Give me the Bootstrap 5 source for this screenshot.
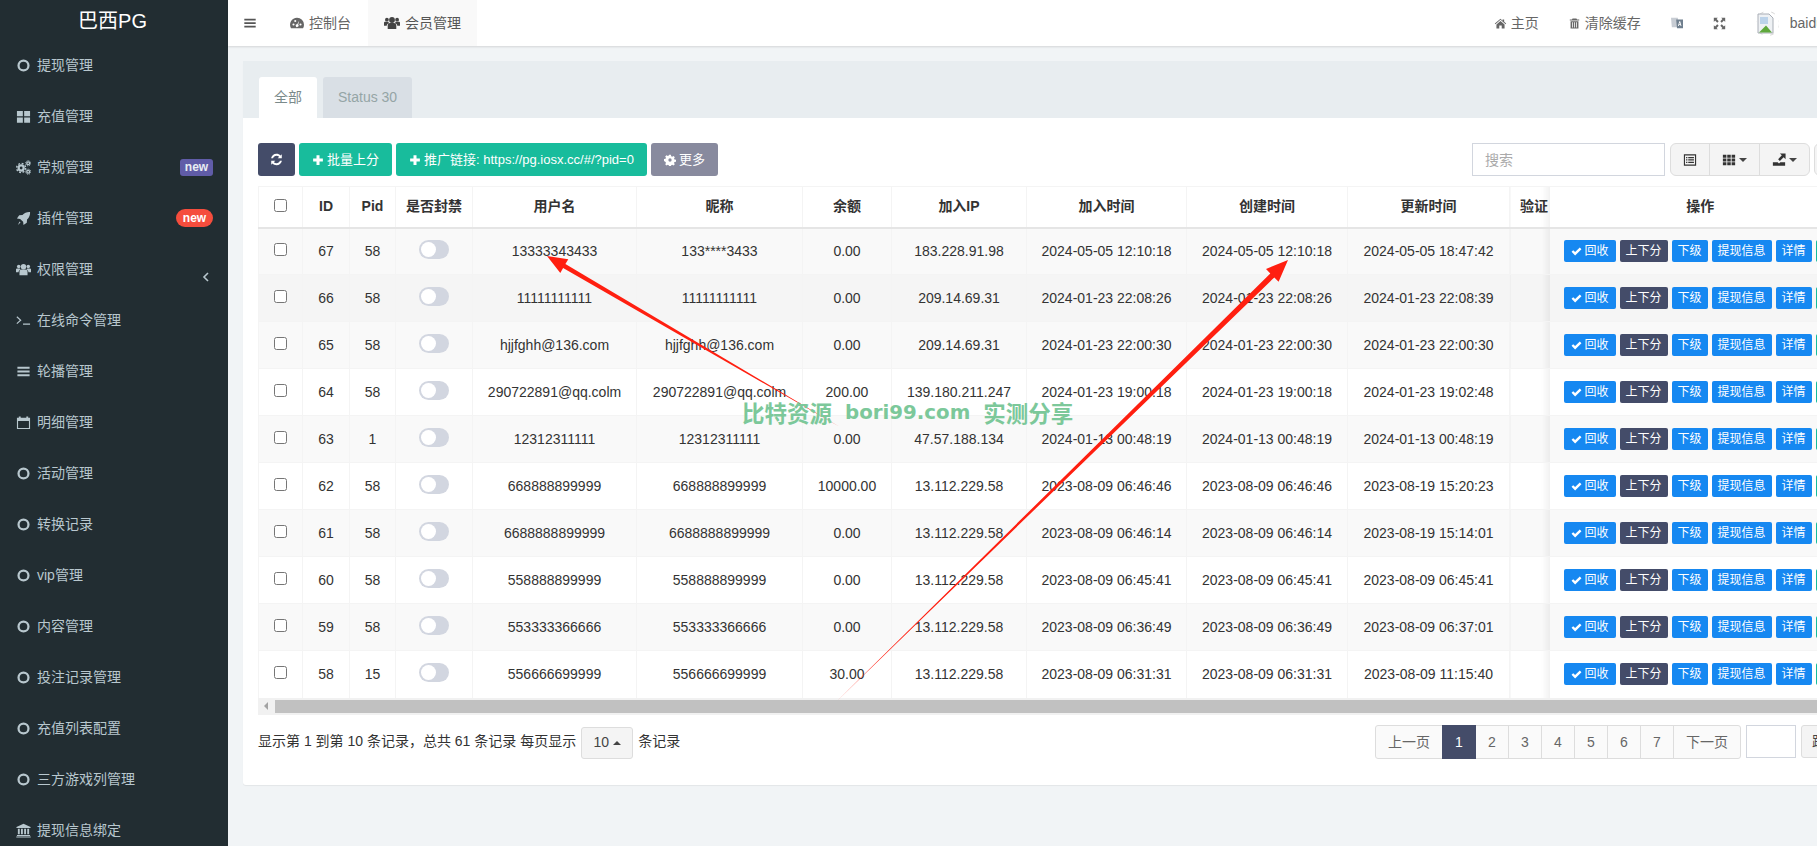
<!DOCTYPE html>
<html lang="zh-CN">
<head>
    <meta charset="UTF-8">
    <meta name="viewport" content="width=device-width, initial-scale=1.0">
    <title>巴西PG - 会员管理</title>
    <link href="https://cdn.jsdelivr.net/npm/bootstrap@5.3.0/dist/css/bootstrap.min.css" rel="stylesheet">
    <style>
        html, body { height: 846px; overflow: hidden; }
        body { font-family: "Liberation Sans", "Noto Sans CJK SC", sans-serif; font-size: 14px; color: #333; background: #f1f4f6; position: relative; }
        .ico { width: 14px; height: 14px; fill: currentColor; flex: none; }

        .side-bar { width: 228px; height: 846px; background: #222d32; color: #b8c7ce; flex: none; overflow: hidden; }
        .side-logo { height: 40px; line-height: 42px; text-align: center; color: #fff; font-size: 20px; padding-right: 3px; }
        .side-item { height: 51px; padding-left: 16px; gap: 6px; color: #b8c7ce; text-decoration: none; position: relative; }
        .side-item .ico { width: 15px; height: 15px; }
        .side-tag { position: absolute; right: 15px; font-size: 12px; font-weight: 700; line-height: 1; padding: 2px 7px 3px; height: 17px; color: #e8edf2; }
        .tag-purple { background: #605ca8; border-radius: 3px; right: 15px; width: 33px; padding: 2px 0; text-align: center; }
        .tag-red { background: #f54d3d; border-radius: 9px; height: 18px; width: 37px; padding: 3px 0; text-align: center; top: 16px; color: #fff; }
        .side-caret { position: absolute; right: 18px; top: 27px; width: 8px; height: 12px; fill: none; stroke: #b8c7ce; stroke-width: 1.6; }

        .main-area { width: 1589px; flex: none; }
        .top-bar { height: 46px; width: 1611px; background: #fff; box-shadow: 0 1px 2px rgba(0,0,0,.12); color: #666; }
        .top-link { height: 46px; padding: 0 15px; gap: 5px; color: #666; text-decoration: none; white-space: nowrap; }
        .top-tab { padding: 0 17px; }
        .top-tab.on { background: #f9f9f9; color: #555; padding: 0 16px; }
        .top-tab.on .ico { color: #444; width: 16px; height: 16px; }
        .top-burger { color: #555; padding: 0 16px 0 15px; }
        .top-home { gap: 4px; }
        .top-home .ico { width: 13px; height: 13px; }
        .top-trash .ico { width: 11px; height: 13px; }
        .top-trans .ico { width: 12px; height: 14px; }
        .top-full .ico { width: 13px; height: 13px; }
        .avatar-box { width: 23px; height: 25px; margin-right: 6px; }
        .avatar-box svg { width: 23px; height: 25px; display: block; }

        .page-wrap { padding: 15px 0 0 15px; }
        .panel-box { width: 1640px; height: 724px; background: #fff; border-radius: 3px; box-shadow: 0 1px 1px rgba(0,0,0,.06); }
        .panel-tabs { height: 57px; background: #e8edf0; padding: 16px 0 0 16px; border: 0; gap: 6px; }
        .panel-tabs .nav-link { height: 41px; line-height: 41px; padding: 0 15px; border: 0; border-radius: 3px 3px 0 0; background: #d9dfe5; color: #95a5a6; margin: 0; }
        .panel-tabs .nav-link.active { background: #fff; color: #7b8a8b; }
        .panel-body-box { padding: 25px 32px 0 15px; }

        .tool-btn { height: 33px; line-height: 31px; padding: 0 12px; font-size: 13px; border-radius: 3px; color: #fff; border: 1px solid transparent; display: inline-flex; align-items: center; gap: 3px; white-space: nowrap; }
        .tool-btn .ico { width: 12px; height: 12px; }
        .tool-btn.only-ico { padding: 0 11px; }
        .tool-btn.only-ico .ico { width: 13px; height: 13px; }
        .c-dark, .c-dark:hover { background: #444c69; color: #fff; }
        .c-green, .c-green:hover { background: #18bc9c; color: #fff; }
        .c-grey, .c-grey:hover { background: #888a9e; color: #fff; }
        .search-input { width: 193px; height: 33px; border: 1px solid #d2d6de; border-radius: 0; font-size: 14px; padding: 0 12px; margin-right: 5px; }
        .search-input::placeholder { color: #aaa; }
        .plain-btn, .plain-btn:hover { background: #f4f4f4; border: 1px solid #ddd; color: #333; height: 33px; padding: 0 12px; display: inline-flex; align-items: center; gap: 3px; font-size: 14px; }
        .plain-btn .ico { width: 14px; height: 14px; }
        .tri { display: inline-block; border-left: 4px solid transparent; border-right: 4px solid transparent; border-top: 4px solid #444; }
        .tri.up { border-top: 0; border-bottom: 4px solid #444; }

        .table-shell { margin-top: 10px; position: relative; width: 1593px; }
        .user-table { table-layout: fixed; width: 1593px; margin: 0; border-top: 1px solid #f4f4f4; }
        .user-table th, .user-table td { text-align: center; vertical-align: middle; padding: 0; border-bottom: 0; border-right: 1px solid #f4f4f4; border-top: 1px solid #f4f4f4; color: #333; white-space: nowrap; overflow: hidden; box-shadow: none; --bs-table-accent-bg: transparent; }
        .user-table th:first-child, .user-table td:first-child { border-left: 1px solid #f4f4f4; }
        .user-table thead th { height: 41px; border-top: 0; border-bottom: 2px solid #e5e5e5; font-weight: 700; }
        .user-table tbody tr { height: 47px; }
        .user-table tbody tr.row-a td { background: #f9f9f9; }
        .user-table tbody tr.row-hover td { background: #f5f5f5; }
        .user-table tbody tr.row-b td { background: #fff; }
        .user-table tbody tr td.fade-cell, .user-table thead tr th.fade-cell { background-image: linear-gradient(to right, transparent calc(100% - 9px), rgba(0,0,0,.055)); border-right: 0; }
        .user-table input[type=checkbox] { display: block; margin: -3px auto 0; width: 13px; height: 13px; }
        .user-table td.op-cell, .user-table th.op-cell { position: relative; z-index: 2; border-right: 0; text-align: left; }
        .user-table th.op-cell { text-align: center; background: #fff; }
        .clip-head { display: block; width: 40px; padding-left: 10px; text-align: left; }
        .tog-sw { display: block; width: 30px; height: 19px; border-radius: 10px; background: #d2d6e0; position: relative; margin: -3px auto 0; }
        .tog-sw::after { content: ""; position: absolute; left: 2px; top: 2px; width: 15px; height: 15px; border-radius: 50%; background: #fff; }
        .op-row { padding-left: 14px; gap: 4px; }
        .op-btn { height: 22px; line-height: 20px; padding: 0 6px; font-size: 12px; border-radius: 2px; color: #fff; border: 0; display: inline-flex; align-items: center; gap: 3px; white-space: nowrap; }
        .op-btn .ico { width: 11px; height: 11px; }
        .op-btn.has-ico { padding: 0 7px; }
        .c-blue, .c-blue:hover { background: #1688f1; color: #fff; }

        .scroll-track { height: 17px; background: #f1f1f1; padding: 2px 0 2px 17px; position: relative; }
        .scroll-thumb { height: 13px; background: #c1c1c1; }
        .scroll-arrow { position: absolute; left: 6px; top: 4px; border-top: 4px solid transparent; border-bottom: 4px solid transparent; border-right: 4px solid #a3a3a3; }

        .foot-row { margin-top: 10px; height: 34px; }
        .foot-info { gap: 5px; color: #333; }
        .size-btn, .size-btn:hover { width: 52px; height: 32px; background: #f4f4f4; border: 1px solid #ddd; border-radius: 3px; color: #444; justify-content: center; display: inline-flex; align-items: center; gap: 4px; padding: 0; margin-top: 2px; font-size: 14px; }
        .page-list { margin: 0; --bs-pagination-padding-x: 0; --bs-pagination-padding-y: 0; --bs-pagination-font-size: 14px; --bs-pagination-color: #666; --bs-pagination-bg: #fafafa; --bs-pagination-border-color: #ddd; --bs-pagination-border-radius: 3px; --bs-pagination-active-bg: #444c69; --bs-pagination-active-border-color: #444c69; }
        .page-list .page-link { height: 34px; line-height: 32px; text-align: center; }
        .pg-w { width: 34px; }
        .pg-text { width: 68px; }
        .jump-input { width: 50px; height: 33px; border: 1px solid #d2d6de; margin-left: 5px; }
        .jump-btn, .jump-btn:hover { width: 50px; height: 33px; background: #f4f4f4; border: 1px solid #ddd; border-radius: 3px; color: #444; margin-left: 5px; padding: 0; font-size: 14px; }

        .mark-layer { position: absolute; left: 0; top: 0; width: 1817px; height: 846px; pointer-events: none; z-index: 5; }
        .stamp-text { position: absolute; left: 742px; top: 396px; z-index: 6; color: #7cc89a; font: 700 22.500px "Noto Sans CJK SC", sans-serif; white-space: nowrap; display: flex; align-items: center; gap: 13px; }
        .stamp-latin { font: 700 19.800px "DejaVu Sans", sans-serif; }
    </style>
</head>
<body class="d-flex">
    <svg width="0" height="0" class="position-absolute">
        <symbol id="i-ring" viewBox="0 0 16 16"><path fill-rule="evenodd" d="M8 1.500a6.500 6.500 0 1 1 0 13 6.500 6.500 0 0 1 0-13zm0 2.400a4.100 4.100 0 1 0 0 8.200 4.100 4.100 0 0 0 0-8.200z"/></symbol>
        <symbol id="i-grid2" viewBox="0 0 16 16"><path d="M1 2h6.300v5.600H1zM8.700 2H15v5.600H8.700zM1 9h6.300v5.600H1zM8.700 9H15v5.600H8.700z"/></symbol>
        <symbol id="i-cogs" viewBox="0 0 16 16"><g fill="none" stroke="currentColor"><circle cx="5.500" cy="8.500" r="2.700" stroke-width="2.400"/><circle cx="5.500" cy="8.500" r="4.800" stroke-width="1.500" stroke-dasharray="2 1.770"/><circle cx="13" cy="3.500" r="1.500" stroke-width="1.400"/><circle cx="13" cy="3.500" r="2.700" stroke-width="1" stroke-dasharray="1.200 .9"/><circle cx="13" cy="12.500" r="1.500" stroke-width="1.400"/><circle cx="13" cy="12.500" r="2.700" stroke-width="1" stroke-dasharray="1.200 .9"/></g></symbol>
        <symbol id="i-rocket" viewBox="0 0 16 16"><path d="M15 1c.3 3-.8 6-3.200 8.100l-.3 3.500L8 15l-.4-3.500-3.200-3.100L1 8l2.400-3.500 3.500-.3C9 1.800 12 .7 15 1zM3.800 11.200l1 1-2.800 2.800z"/></symbol>
        <symbol id="i-users" viewBox="0 0 16 16"><circle cx="8" cy="5" r="2.900"/><circle cx="2.900" cy="4.700" r="1.900"/><circle cx="13.100" cy="4.700" r="1.900"/><path d="M3.700 14V10.500c0-1.700 1.300-2.500 2.300-2.500h4c1 0 2.300.8 2.300 2.500V14zM0 7.800C0 7 .7 6.800 1.300 6.800h2.800c.3.600.7 1 1.100 1.300-1.500.4-2.300 1.300-2.500 2.700H0zM16 7.800c0-.8-.7-1-1.300-1h-2.800c-.3.600-.7 1-1.100 1.300 1.500.4 2.300 1.300 2.500 2.700H16z"/></symbol>
        <symbol id="i-term" viewBox="0 0 16 16"><path d="M1.300 3.500l4.600 4.100-4.600 4.100-.8-.9 3.500-3.200L.5 4.400zM7.500 11.300H15v1.300H7.500z"/></symbol>
        <symbol id="i-bars" viewBox="0 0 16 16"><path d="M1.500 3h13v2.100h-13zM1.500 7h13v2.100h-13zM1.500 11h13v2.100h-13z"/></symbol>
        <symbol id="i-cal" viewBox="0 0 16 16"><path fill-rule="evenodd" d="M1 3h2V1.500h2V3h6V1.500h2V3h2v12H1zm1.200 3.500v7.300h11.600V6.500z"/></symbol>
        <symbol id="i-bank" viewBox="0 0 16 16"><path d="M8 .8l7.500 3.400v1H.5v-1zM2 6h2v6H2zM5.300 6h2v6h-2zM8.700 6h2v6h-2zM12 6h2v6h-2zM1 12.800h14v1H1zM.3 14.300h15.400v1.200H.3z"/></symbol>
        <symbol id="i-gauge" viewBox="0 0 16 16"><path fill-rule="evenodd" d="M8 2a8 8 0 0 1 8 8c0 1.500-.4 2.900-1.100 4H1.100A8 8 0 0 1 8 2zM4 8.500a1.200 1.200 0 1 0 0 2.400 1.200 1.200 0 0 0 0-2.400zm8 0a1.200 1.200 0 1 0 0 2.400 1.200 1.200 0 0 0 0-2.400zM6 4.500a1.200 1.200 0 1 0 0 2.400 1.200 1.200 0 0 0 0-2.400zM10.600 5L8.300 9.400a1.600 1.600 0 1 0 1 .5z"/></symbol>
        <symbol id="i-home" viewBox="0 0 16 16"><path d="M8 2L1 8l.7.8L8 3.500l6.300 5.300.7-.8-2.500-2.100V3h-2v1.600zM3 9.300L8 5l5 4.300V14H9.500v-3.500h-3V14H3z"/></symbol>
        <symbol id="i-trash" viewBox="1 0 14 16"><path fill-rule="evenodd" d="M5.500 1.500h5l.7 1.500H14v1.300H2V3h2.800zM3 5h10v9.500H3zm2 1.500V13h1V6.500zm2.500 0V13h1V6.500zm2.500 0V13h1V6.500z"/></symbol>
        <symbol id="i-trans" viewBox="1 0 14 16"><path fill="#c7ccd3" d="M1 2h8l1 11H2z"/><path fill="#6f7f8e" d="M7 4h8v10H8z"/><path fill="#fff" d="M10.700 6h1l1.500 5.500h-1l-.3-1.200h-1.500l-.3 1.200h-1zm.5 1.300l-.5 2.100h1z"/></symbol>
        <symbol id="i-expand" viewBox="0 0 16 16"><path d="M1 1h5L4.400 2.600 7 5.200 5.200 7 2.600 4.400 1 6zM15 1v5l-1.600-1.600L10.800 7 9 5.200l2.600-2.600L10 1zM1 15v-5l1.600 1.600L5.200 9 7 10.800l-2.600 2.600L6 15zM15 15h-5l1.600-1.600L9 10.800 10.800 9l2.600 2.600L15 10z"/></symbol>
        <symbol id="i-sync" viewBox="0 0 16 16"><path d="M14.500 1.500v5h-5l1.800-1.800C10.400 3.900 9.300 3.500 8 3.500c-2 0-3.700 1.200-4.200 3H1.300C2 3.300 4.700 1 8 1c2 0 3.700.7 5 2zM1.500 14.500v-5h5l-1.800 1.800c.9.800 2 1.200 3.300 1.200 2 0 3.700-1.200 4.200-3h2.500C14 12.700 11.300 15 8 15c-2 0-3.700-.7-5-2z"/></symbol>
        <symbol id="i-plus" viewBox="0 0 16 16"><path d="M6 1.500h4V6h4.500v4H10v4.500H6V10H1.500V6H6z"/></symbol>
        <symbol id="i-cog" viewBox="0 0 16 16"><path fill-rule="evenodd" d="M6.800 1h2.400l.4 2 1.300.6 1.800-1 1.700 1.700-1 1.800.5 1.300 2.100.4v2.400l-2.100.4-.5 1.300 1 1.800-1.700 1.700-1.800-1-1.300.5-.4 2.100H6.800l-.4-2.100-1.300-.5-1.800 1-1.700-1.700 1-1.800-.5-1.300L0 9.200V6.800l2.100-.4.500-1.300-1-1.800 1.700-1.700 1.800 1 1.300-.6zM8 5.800a2.200 2.200 0 1 0 0 4.400 2.200 2.200 0 0 0 0-4.400z"/></symbol>
        <symbol id="i-list" viewBox="0 0 16 16"><path fill-rule="evenodd" d="M1 1.500h14v13H1zM2.300 2.800v10.400h11.400V2.800zM3.500 4.500h1.500V6H3.500zM6 4.500h6.500V6H6zM3.500 7.200h1.500v1.500H3.500zM6 7.200h6.500v1.500H6zM3.500 10h1.500v1.500H3.500zM6 10h6.500v1.500H6z"/></symbol>
        <symbol id="i-th" viewBox="0 0 16 16"><path d="M1 2h4v3.500H1zM6 2h4v3.500H6zM11 2h4v3.500h-4zM1 6.300h4v3.500H1zM6 6.300h4v3.500H6zM11 6.300h4v3.500h-4zM1 10.600h4v3.500H1zM6 10.600h4v3.500H6zM11 10.600h4v3.500h-4z"/></symbol>
        <symbol id="i-export" viewBox="0 0 16 16"><path d="M9 .5h6.500V7l-2.200-2.200L9 9 7 7l4.200-4.300zM1 10.500h5.500L8 12l1.500-1.500H15v4H1z"/></symbol>
        <symbol id="i-check" viewBox="0 0 16 16"><path d="M6 13.800L.8 8.500l2.400-2.400L6 8.900l6.800-6.700 2.400 2.400z"/></symbol>
    </svg>

    <aside class="side-bar">
        <div class="side-logo">巴西PG</div>
        <a class="side-item d-flex align-items-center" href="#"><svg class="ico"><use href="#i-ring"/></svg>提现管理</a>
        <a class="side-item d-flex align-items-center" href="#"><svg class="ico"><use href="#i-grid2"/></svg>充值管理</a>
        <a class="side-item d-flex align-items-center" href="#"><svg class="ico"><use href="#i-cogs"/></svg>常规管理<span class="side-tag tag-purple">new</span></a>
        <a class="side-item d-flex align-items-center" href="#"><svg class="ico"><use href="#i-rocket"/></svg>插件管理<span class="side-tag tag-red">new</span></a>
        <a class="side-item d-flex align-items-center" href="#"><svg class="ico"><use href="#i-users"/></svg>权限管理<svg class="side-caret" viewBox="0 0 8 12"><path d="M6 2L2 6l4 4"/></svg></a>
        <a class="side-item d-flex align-items-center" href="#"><svg class="ico"><use href="#i-term"/></svg>在线命令管理</a>
        <a class="side-item d-flex align-items-center" href="#"><svg class="ico"><use href="#i-bars"/></svg>轮播管理</a>
        <a class="side-item d-flex align-items-center" href="#"><svg class="ico"><use href="#i-cal"/></svg>明细管理</a>
        <a class="side-item d-flex align-items-center" href="#"><svg class="ico"><use href="#i-ring"/></svg>活动管理</a>
        <a class="side-item d-flex align-items-center" href="#"><svg class="ico"><use href="#i-ring"/></svg>转换记录</a>
        <a class="side-item d-flex align-items-center" href="#"><svg class="ico"><use href="#i-ring"/></svg>vip管理</a>
        <a class="side-item d-flex align-items-center" href="#"><svg class="ico"><use href="#i-ring"/></svg>内容管理</a>
        <a class="side-item d-flex align-items-center" href="#"><svg class="ico"><use href="#i-ring"/></svg>投注记录管理</a>
        <a class="side-item d-flex align-items-center" href="#"><svg class="ico"><use href="#i-ring"/></svg>充值列表配置</a>
        <a class="side-item d-flex align-items-center" href="#"><svg class="ico"><use href="#i-ring"/></svg>三方游戏列管理</a>
        <a class="side-item d-flex align-items-center" href="#"><svg class="ico"><use href="#i-bank"/></svg>提现信息绑定</a>
    </aside>

    <div class="main-area">
        <div class="top-bar d-flex align-items-center">
            <a class="top-link top-burger d-flex align-items-center" href="#"><svg class="ico"><use href="#i-bars"/></svg></a>
            <a class="top-link top-tab d-flex align-items-center" href="#"><svg class="ico"><use href="#i-gauge"/></svg>控制台</a>
            <a class="top-link top-tab on d-flex align-items-center" href="#"><svg class="ico"><use href="#i-users"/></svg>会员管理</a>
            <div class="ms-auto d-flex align-items-center">
                <a class="top-link top-home d-flex align-items-center" href="#"><svg class="ico"><use href="#i-home"/></svg>主页</a>
                <a class="top-link top-trash d-flex align-items-center" href="#"><svg class="ico"><use href="#i-trash"/></svg>清除缓存</a>
                <a class="top-link top-trans d-flex align-items-center" href="#"><svg class="ico"><use href="#i-trans"/></svg></a>
                <a class="top-link top-full d-flex align-items-center" href="#"><svg class="ico"><use href="#i-expand"/></svg></a>
                <a class="top-link d-flex align-items-center" href="#">
                    <span class="avatar-box">
                        <svg viewBox="0 0 23 25"><circle cx="11.500" cy="12.500" r="12" fill="none" stroke="#ccc" stroke-width=".8" stroke-dasharray="4 8"/><path d="M2 3h11l4 4v15H2z" fill="#eef1f4" stroke="#a9aeb6"/><path d="M3 21.500l7-7 6 7z" fill="#5fa83c"/><path d="M4 6h8v7H4z" fill="#bcd3ea"/></svg>
                    </span>baidu</a>
            </div>
        </div>

        <div class="page-wrap">
            <div class="panel-box">
                <ul class="nav nav-tabs panel-tabs">
                    <li class="nav-item"><a class="nav-link active" href="#">全部</a></li>
                    <li class="nav-item"><a class="nav-link" href="#">Status 30</a></li>
                </ul>
                <div class="panel-body-box">
                    <div class="d-flex align-items-center">
                        <div class="d-flex gap-1">
                            <a class="btn tool-btn only-ico c-dark" href="#"><svg class="ico"><use href="#i-sync"/></svg></a>
                            <a class="btn tool-btn c-green" href="#"><svg class="ico"><use href="#i-plus"/></svg>批量上分</a>
                            <a class="btn tool-btn c-green" href="#"><svg class="ico"><use href="#i-plus"/></svg>推广链接: https://pg.iosx.cc/#/?pid=0</a>
                            <a class="btn tool-btn c-grey" href="#"><svg class="ico"><use href="#i-cog"/></svg>更多</a>
                        </div>
                        <div class="ms-auto d-flex align-items-center">
                            <input class="search-input" type="text" placeholder="搜索">
                            <div class="btn-group">
                                <button class="btn plain-btn" type="button"><svg class="ico"><use href="#i-list"/></svg></button>
                                <button class="btn plain-btn" type="button"><svg class="ico"><use href="#i-th"/></svg><span class="tri"></span></button>
                                <button class="btn plain-btn" type="button"><svg class="ico"><use href="#i-export"/></svg><span class="tri"></span></button>
                            </div>
                            <button class="btn plain-btn ms-1" type="button" style="width:37px"></button>
                        </div>
                    </div>

                    <div class="table-shell">
                        <table class="table user-table">
                            <colgroup>
                                <col style="width:44px"><col style="width:47px"><col style="width:46px"><col style="width:77px">
                                <col style="width:164px"><col style="width:166px"><col style="width:89px"><col style="width:135px">
                                <col style="width:160px"><col style="width:161px"><col style="width:162px"><col style="width:40px"><col>
                            </colgroup>
                            <thead>
                                <tr>
                                    <th><input type="checkbox"></th><th>ID</th><th>Pid</th><th>是否封禁</th><th>用户名</th><th>昵称</th><th>余额</th><th>加入IP</th>
                                    <th>加入时间</th><th>创建时间</th><th>更新时间</th><th class="fade-cell"><span class="clip-head">验证</span></th><th class="op-cell">操作</th>
                                </tr>
                            </thead>
                            <tbody id="user-rows"></tbody>
                        </table>
                        <div class="scroll-track"><span class="scroll-arrow"></span><div class="scroll-thumb"></div></div>
                    </div>

                    <div class="foot-row d-flex align-items-center">
                        <div class="foot-info d-flex align-items-center">
                            <span>显示第 1 到第 10 条记录，总共 61 条记录 每页显示</span>
                            <button class="btn size-btn" type="button">10 <span class="tri up"></span></button>
                            <span>条记录</span>
                        </div>
                        <div class="ms-auto d-flex align-items-start">
                            <ul class="pagination page-list">
                                <li class="page-item"><a class="page-link pg-text" href="#">上一页</a></li>
                                <li class="page-item active"><a class="page-link pg-w" href="#">1</a></li>
                                <li class="page-item"><a class="page-link pg-w" href="#">2</a></li>
                                <li class="page-item"><a class="page-link pg-w" href="#">3</a></li>
                                <li class="page-item"><a class="page-link pg-w" href="#">4</a></li>
                                <li class="page-item"><a class="page-link pg-w" href="#">5</a></li>
                                <li class="page-item"><a class="page-link pg-w" href="#">6</a></li>
                                <li class="page-item"><a class="page-link pg-w" href="#">7</a></li>
                                <li class="page-item"><a class="page-link pg-text" href="#">下一页</a></li>
                            </ul>
                            <input class="jump-input" type="text">
                            <button class="btn jump-btn" type="button">跳转</button>
                        </div>
                    </div>
                </div>
            </div>
        </div>
    </div>

    <!-- red arrows and watermark drawn over the screenshot -->
    <svg class="mark-layer" viewBox="0 0 1817 846">
        <path fill="#ff1f10" d="M547 256 L568.300 259.200 L565.400 264.100 L840 427 L563.100 268.100 L560.300 273 Z"/>
        <path fill="#ff1f10" d="M1288 260 L1278.600 281.800 L1274.300 277.400 L837 701 L1270.300 273.400 L1266 269 Z"/>
    </svg>
    <div class="stamp-text"><span>比特资源</span><span class="stamp-latin">bori99.com</span><span>实测分享</span></div>

    <script>
        const rows = [
            [67, 58, "13333343433", "133****3433", "0.00", "183.228.91.98", "2024-05-05 12:10:18", "2024-05-05 12:10:18", "2024-05-05 18:47:42"],
            [66, 58, "11111111111", "11111111111", "0.00", "209.14.69.31", "2024-01-23 22:08:26", "2024-01-23 22:08:26", "2024-01-23 22:08:39"],
            [65, 58, "hjjfghh@136.com", "hjjfghh@136.com", "0.00", "209.14.69.31", "2024-01-23 22:00:30", "2024-01-23 22:00:30", "2024-01-23 22:00:30"],
            [64, 58, "290722891@qq.colm", "290722891@qq.colm", "200.00", "139.180.211.247", "2024-01-23 19:00:18", "2024-01-23 19:00:18", "2024-01-23 19:02:48"],
            [63, 1, "12312311111", "12312311111", "0.00", "47.57.188.134", "2024-01-13 00:48:19", "2024-01-13 00:48:19", "2024-01-13 00:48:19"],
            [62, 58, "668888899999", "668888899999", "10000.00", "13.112.229.58", "2023-08-09 06:46:46", "2023-08-09 06:46:46", "2023-08-19 15:20:23"],
            [61, 58, "6688888899999", "6688888899999", "0.00", "13.112.229.58", "2023-08-09 06:46:14", "2023-08-09 06:46:14", "2023-08-19 15:14:01"],
            [60, 58, "558888899999", "558888899999", "0.00", "13.112.229.58", "2023-08-09 06:45:41", "2023-08-09 06:45:41", "2023-08-09 06:45:41"],
            [59, 58, "553333366666", "553333366666", "0.00", "13.112.229.58", "2023-08-09 06:36:49", "2023-08-09 06:36:49", "2023-08-09 06:37:01"],
            [58, 15, "556666699999", "556666699999", "30.00", "13.112.229.58", "2023-08-09 06:31:31", "2023-08-09 06:31:31", "2023-08-09 11:15:40"]
        ];

        const opButtons = `
            <div class="op-row d-flex">
                <a class="btn op-btn has-ico c-blue" href="#"><svg class="ico"><use href="#i-check"/></svg>回收</a>
                <a class="btn op-btn c-dark" href="#">上下分</a>
                <a class="btn op-btn c-blue" href="#">下级</a>
                <a class="btn op-btn c-blue" href="#">提现信息</a>
                <a class="btn op-btn c-blue" href="#">详情</a>
                <a class="btn op-btn c-green" href="#">编辑</a>
            </div>`;

        document.getElementById("user-rows").innerHTML = rows.map((r, i) => {
            let cls = i % 2 ? "row-b" : "row-a";
            if (i === 1) cls = "row-hover";
            return `<tr class="${cls}">
                <td><input type="checkbox"></td><td>${r[0]}</td><td>${r[1]}</td><td><span class="tog-sw"></span></td>
                <td>${r[2]}</td><td>${r[3]}</td><td>${r[4]}</td><td>${r[5]}</td><td>${r[6]}</td><td>${r[7]}</td><td>${r[8]}</td><td class="fade-cell"></td>
                <td class="op-cell">${opButtons}</td>
            </tr>`;
        }).join("");
    </script>
    <script src="https://cdn.jsdelivr.net/npm/bootstrap@5.3.0/dist/js/bootstrap.bundle.min.js"></script>
</body>
</html>
